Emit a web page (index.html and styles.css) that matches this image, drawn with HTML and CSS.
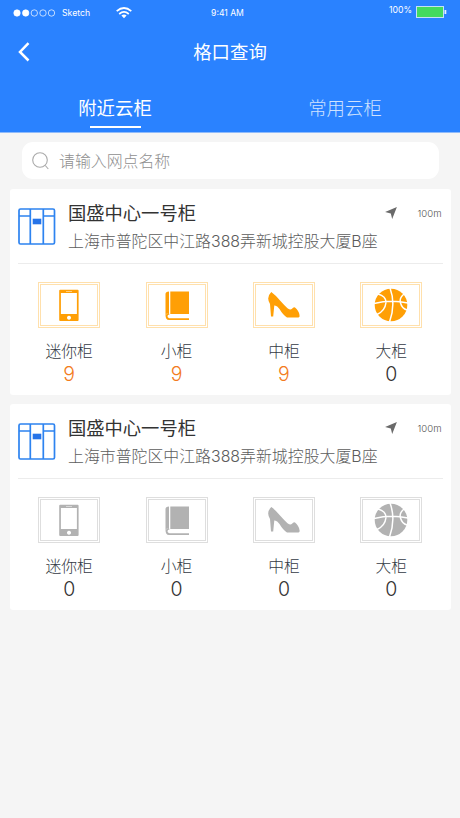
FILE: index.html
```html
<!DOCTYPE html>
<html lang="zh-CN">
<head>
<meta charset="utf-8">
<title>格口查询</title>
<link rel="stylesheet" href="styles.css">
</head>
<body>
<svg class="defs" width="0" height="0">
  <symbol id="cabinet" viewBox="0 0 38 38">
    <g fill="none" stroke="#2d83f0" stroke-width="1.7"><rect x="1" y="1" width="35.5" height="35" rx="1.5"/><path d="M12.3 1v35M25.3 1v35M1 8h11.3M25.3 8h11.2"/></g>
    <rect x="14.7" y="10.7" width="8.6" height="5.6" fill="#2673e8"/>
  </symbol>
  <symbol id="arrow" viewBox="0 0 12 12"><path d="M11.900.1 7.200 11.900 5.800 6.500.1 5z" fill="#6a6a6a"/></symbol>
  <symbol id="phone" viewBox="0 0 34 34"><path fill="currentColor" fill-rule="evenodd" d="M8.200 1.700h17.400q1 0 1 1v29.200q0 1-1 1H8.200q-1 0-1-1V2.700q0-1 1-1zM8.900 5v21h16V5zM14 2.900v.7h6v-.7zM17 27.700a2 2 0 1 0 .01 0z"/></symbol>
  <symbol id="book" viewBox="0 0 34 34"><path fill="currentColor" d="M5.500 6Q5.500 3.500 9 3.400V25.200Q6.500 25.600 5.500 27zM10.300 3.400H29V26H10.300zM5.500 27Q5.500 32 9 32H29V30.300H9.500Q7.500 30 7.500 28.300 7.500 26.800 9.500 26.600L9 25.200Q6 25.400 5.500 27z"/></symbol>
  <symbol id="shoe" viewBox="0 0 34 34"><path fill="currentColor" d="M4.300 4Q1.200 7 1.200 10.500 1.300 13.500 3 16L4 28.500H6.200L7.300 17.500Q10 17 12.500 21 16 27 20 29.500H31.500Q33 29 32.500 27 31.500 22 28 19.500 26.500 18.700 25 20.800 23.500 22.500 20.500 20.200 17 17 13.500 13 8.500 7 4.300 4z"/></symbol>
  <symbol id="ball" viewBox="0 0 34 34"><circle cx="17" cy="17" r="16.300" fill="currentColor"/><g fill="none" stroke="#fff" stroke-width="1.500"><path d="M16 0Q22 16 15.500 34M0 15.500Q17 11.500 34 15M4 6Q12 8 12 14.500 11 23 3 26.500M30 6Q25 10 26.500 15 28 20.500 33 22"/></g></symbol>
</svg>

<header class="header">
  <div class="status">
    <div class="carrier">
      <svg width="43" height="10" viewBox="0 0 43 10"><g fill="#fff" stroke="#fff" stroke-width=".7"><circle cx="4" cy="5" r="3.200"/><circle cx="12.700" cy="5" r="3.200"/><g fill="none"><circle cx="21.300" cy="5" r="3.200"/><circle cx="30" cy="5" r="3.200"/><circle cx="38.500" cy="5" r="3.200"/></g></g></svg>
      <span class="network">Sketch</span>
      <svg class="wifi" width="16" height="12" viewBox="0 0 16 12"><g fill="none" stroke="#fff" stroke-width="1.700"><path d="M.7 4.200Q8-2.200 15.300 4.200M3.200 7Q8 2.800 12.800 7"/></g><path d="M5.400 8.500Q8 6.500 10.600 8.500L8 11.300z" fill="#fff"/></svg>
    </div>
    <span class="time">9:41 AM</span>
    <div class="power">
      <span class="percent">100%</span>
      <svg width="31" height="12" viewBox="0 0 31 12"><rect x=".5" y=".5" width="27" height="11" fill="#43da5f" stroke="#c4e2f5"/><rect x="28.500" y="4" width="1.800" height="4" fill="#e6f2ff"/></svg>
    </div>
  </div>
  <div class="navbar">
    <svg class="back" width="12" height="20" viewBox="0 0 12 20"><path d="M10.500 1.200 2 10l8.500 8.500" fill="none" stroke="#fff" stroke-width="2.500"/></svg>
    <h1 class="title">格口查询</h1>
  </div>
  <nav class="tabs">
    <div class="tab active">附近云柜</div>
    <div class="tab">常用云柜</div>
  </nav>
</header>

<main class="content">
  <div class="search">
    <svg width="18" height="18" viewBox="0 0 18 18"><g fill="none" stroke="#aaa" stroke-width="1.100"><circle cx="8" cy="8" r="7.300"/><path d="M13.300 13.500 16.300 17"/></g></svg>
    <span>请输入网点名称</span>
  </div>

  <section class="card">
    <div class="site">
      <svg class="cabinet" width="38" height="38"><use href="#cabinet"/></svg>
      <div class="info">
        <h2 class="name">国盛中心一号柜</h2>
        <p class="address">上海市普陀区中江路388弄新城控股大厦B座</p>
      </div>
      <div class="distance"><svg width="12" height="12"><use href="#arrow"/></svg><span>100m</span></div>
    </div>
    <div class="sizes">
      <div class="size"><div class="frame"><svg><use href="#phone"/></svg></div><span class="label">迷你柜</span><span class="count">9</span></div>
      <div class="size"><div class="frame"><svg><use href="#book"/></svg></div><span class="label">小柜</span><span class="count">9</span></div>
      <div class="size"><div class="frame"><svg><use href="#shoe"/></svg></div><span class="label">中柜</span><span class="count">9</span></div>
      <div class="size"><div class="frame"><svg><use href="#ball"/></svg></div><span class="label">大柜</span><span class="count none">0</span></div>
    </div>
  </section>

  <section class="card empty">
    <div class="site">
      <svg class="cabinet" width="38" height="38"><use href="#cabinet"/></svg>
      <div class="info">
        <h2 class="name">国盛中心一号柜</h2>
        <p class="address">上海市普陀区中江路388弄新城控股大厦B座</p>
      </div>
      <div class="distance"><svg width="12" height="12"><use href="#arrow"/></svg><span>100m</span></div>
    </div>
    <div class="sizes">
      <div class="size"><div class="frame"><svg><use href="#phone"/></svg></div><span class="label">迷你柜</span><span class="count none">0</span></div>
      <div class="size"><div class="frame"><svg><use href="#book"/></svg></div><span class="label">小柜</span><span class="count none">0</span></div>
      <div class="size"><div class="frame"><svg><use href="#shoe"/></svg></div><span class="label">中柜</span><span class="count none">0</span></div>
      <div class="size"><div class="frame"><svg><use href="#ball"/></svg></div><span class="label">大柜</span><span class="count none">0</span></div>
    </div>
  </section>
</main>
</body>
</html>
```

FILE: styles.css
```css
* { box-sizing: border-box; }
body {
  margin: 0;
  min-height: 818px;
  background: #f5f5f5;
  font-family: Inter, "Noto Sans CJK SC", sans-serif;
  color: #333;
}
h1, h2, p { margin: 0; font-weight: 400; }
svg { display: block; flex: none; }
.defs { position: absolute; }

.header {
  height: 133px;
  background: #2a82ff;
  border-bottom: 1px solid #8fbbfb;
  color: #fff;
}
.status {
  display: grid;
  grid-template-columns: 1fr auto 1fr;
  height: 26px;
  padding: 0 13px;
  font-size: 8.700px;
  line-height: 26px;
}
.carrier { display: flex; align-items: center; }
.network { margin-left: 6px; width: 28px; white-space: nowrap; }
.wifi { margin: 0 0 1px 26px; }
.time { margin-right: 6px; padding-left: 1px; font-size: 8.600px; }
.power { display: flex; justify-content: flex-end; align-items: center; gap: 4px; height: 24px; }
.percent { margin-top: -5px; }

.navbar {
  display: grid;
  grid-template-columns: 1fr auto 1fr;
  align-items: center;
  height: 52px;
  padding: 0 18px;
}
.title { font-size: 18.400px; line-height: 26px; }
.tabs { display: grid; grid-template-columns: 1fr 1fr; }
.tab {
  display: flex;
  flex-direction: column;
  align-items: center;
  padding-top: 16px;
  font-size: 18.400px;
  line-height: 28px;
  font-weight: 300;
  color: #d0e3ff;
}
.tab.active { font-weight: 400; color: #fff; }
.tab.active::after { content: ""; width: 51px; height: 2px; margin-top: 4px; background: #fff; }

.content { padding: 9px 9.500px 0 10px; }
.search {
  display: flex;
  align-items: center;
  gap: 9px;
  height: 37px;
  margin: 0 12px 10px;
  padding-left: 10px;
  border-radius: 11px;
  background: #fff;
  color: #8f8f8f;
  font-size: 15.900px;
  font-weight: 300;
}
.card { height: 205.500px; margin-bottom: 9.500px; border-radius: 3px; background: #fff; }
.site {
  display: flex;
  height: 74.500px;
  margin: 0 8px;
  border-bottom: 1px solid #ececec;
}
.cabinet { margin-top: 18.500px; }
.info { flex: 1; margin-left: 12px; padding-top: 11px; white-space: nowrap; }
.name { font-size: 18.300px; line-height: 27px; }
.address { font-size: 15.900px; line-height: 29px; font-weight: 300; color: #5c5c5c; }
.distance {
  display: flex;
  align-items: center;
  justify-content: space-between;
  width: 57px;
  height: 12px;
  margin-top: 18px;
  margin-right: 1px;
  font-size: 9.600px;
  font-weight: 300;
  color: #555;
}
.sizes { display: grid; grid-template-columns: repeat(4, 1fr); padding: 18.500px 5.500px 0; }
.size { display: flex; flex-direction: column; align-items: center; color: #ff9f05; }
.frame {
  display: flex;
  align-items: center;
  justify-content: center;
  width: 62px;
  height: 46px;
  border: 3px double #ffe0ac;
  background: #fff;
}
.frame svg { width: 34px; height: 34px; }
.label { margin-top: 12px; font-size: 15.800px; line-height: 23px; font-weight: 300; color: #333a44; }
.count { font-size: 19.500px; font-weight: 300; line-height: 22px; color: #f37b20; }
.count.none { color: #333; }
.empty .size { color: #b2b2b2; }
.empty .frame { border-color: #dedede; }
```
